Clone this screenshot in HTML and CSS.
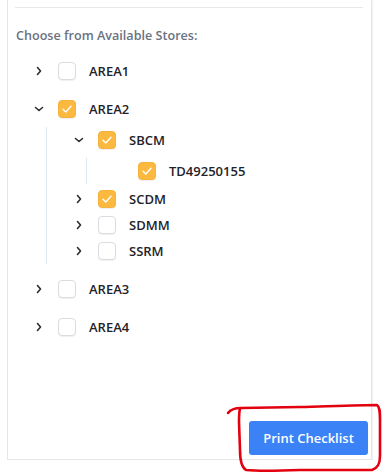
FILE: index.html
```html
<!DOCTYPE html>
<html lang="en">
<head>
    <meta charset="UTF-8">
    <meta name="viewport" content="width=device-width, initial-scale=1.0">
    <title>Print Checklist</title>
    <link rel="stylesheet" href="styles.css">
</head>
<body>
    <div class="card">
        <div class="divider"></div>
        <h4 class="stores-title">Choose from Available Stores:</h4>

        <ul class="tree">
            <li class="node">
                <div class="row">
                    <span class="toggle"><svg width="10" height="10" viewBox="0 0 10 10"><path d="M3.5 1.5 L6.5 5 L3.5 8.5"/></svg></span>
                    <span class="check"></span>
                    <span class="label">AREA1</span>
                </div>
            </li>
            <li class="node">
                <div class="row">
                    <span class="toggle"><svg width="10" height="10" viewBox="0 0 10 10"><path d="M1.5 3.5 L5 6.5 L8.5 3.5"/></svg></span>
                    <span class="check checked"><svg width="18" height="18" viewBox="0 0 18 18"><path d="M5 9.2 L7.8 12 L13 6.3"/></svg></span>
                    <span class="label">AREA2</span>
                </div>
                <ul class="children">
                    <li class="node">
                        <div class="row">
                            <span class="toggle"><svg width="10" height="10" viewBox="0 0 10 10"><path d="M1.5 3.5 L5 6.5 L8.5 3.5"/></svg></span>
                            <span class="check checked"><svg width="18" height="18" viewBox="0 0 18 18"><path d="M5 9.2 L7.8 12 L13 6.3"/></svg></span>
                            <span class="label">SBCM</span>
                        </div>
                        <ul class="children">
                            <li class="node">
                                <div class="row">
                                    <span class="toggle"></span>
                                    <span class="check checked"><svg width="18" height="18" viewBox="0 0 18 18"><path d="M5 9.2 L7.8 12 L13 6.3"/></svg></span>
                                    <span class="label">TD49250155</span>
                                </div>
                            </li>
                        </ul>
                    </li>
                    <li class="node">
                        <div class="row">
                            <span class="toggle"><svg width="10" height="10" viewBox="0 0 10 10"><path d="M3.5 1.5 L6.5 5 L3.5 8.5"/></svg></span>
                            <span class="check checked"><svg width="18" height="18" viewBox="0 0 18 18"><path d="M5 9.2 L7.8 12 L13 6.3"/></svg></span>
                            <span class="label">SCDM</span>
                        </div>
                    </li>
                    <li class="node">
                        <div class="row">
                            <span class="toggle"><svg width="10" height="10" viewBox="0 0 10 10"><path d="M3.5 1.5 L6.5 5 L3.5 8.5"/></svg></span>
                            <span class="check"></span>
                            <span class="label">SDMM</span>
                        </div>
                    </li>
                    <li class="node">
                        <div class="row">
                            <span class="toggle"><svg width="10" height="10" viewBox="0 0 10 10"><path d="M3.5 1.5 L6.5 5 L3.5 8.5"/></svg></span>
                            <span class="check"></span>
                            <span class="label">SSRM</span>
                        </div>
                    </li>
                </ul>
            </li>
            <li class="node">
                <div class="row">
                    <span class="toggle"><svg width="10" height="10" viewBox="0 0 10 10"><path d="M3.5 1.5 L6.5 5 L3.5 8.5"/></svg></span>
                    <span class="check"></span>
                    <span class="label">AREA3</span>
                </div>
            </li>
            <li class="node">
                <div class="row">
                    <span class="toggle"><svg width="10" height="10" viewBox="0 0 10 10"><path d="M3.5 1.5 L6.5 5 L3.5 8.5"/></svg></span>
                    <span class="check"></span>
                    <span class="label">AREA4</span>
                </div>
            </li>
        </ul>

        <div class="footer">
            <button class="print-btn">Print Checklist</button>
        </div>
    </div>

    <!-- hand-drawn highlight around the button -->
    <svg class="annotation" width="386" height="476" viewBox="0 0 386 476">
        <path d="M228 413 C231 409 235 408 241 408 L300 407 C335 406 362 405 377 405 C380 407 380 412 380 420 L380 456 C380 464 378 468 372 470 L300 470 C275 471 255 471 246 470 C241 467 240 460 240 450 L239 422 C239 416 239 412 240 409"/>
    </svg>
</body>
</html>
```

FILE: styles.css
```css
body {
    margin: 0;
    padding: 0;
    background-color: #fff;
    font-family: "Open Sans", "Noto Sans", Arial, sans-serif;
}
.card {
    box-sizing: border-box;
    width: 365px;
    height: 460px;
    margin-left: 7px;
    background-color: #fff;
    border: 1px solid #e6e6e6;
    border-top: 0;
    box-shadow: 1px 1px 1px rgba(0,0,0,0.05);
    padding-top: 7px;
    display: flex;
    flex-direction: column;
}
.divider {
    height: 1px;
    background-color: #e8e8e8;
    margin: 0 8px 0 7px;
}
.stores-title {
    margin: 19px 0 0 8px;
    font-size: 12.6px;
    line-height: 18px;
    font-weight: 600;
    color: #6b7280;
}
.tree {
    list-style: none;
    margin: 13px 0 0 22px;
    padding: 0;
}
.tree > .node + .node {
    margin-top: 12px;
}
.children {
    list-style: none;
    margin: 5px 0 2px 16px;
    padding: 0 0 0 23px;
    border-left: 1px solid #e2e8f0;
}
.row {
    display: flex;
    align-items: center;
    height: 26px;
}
.toggle {
    width: 18px;
    height: 18px;
    margin-right: 10px;
    display: flex;
    align-items: center;
    justify-content: center;
}
.toggle svg path {
    fill: none;
    stroke: #2d2d2d;
    stroke-width: 1.6;
    stroke-linecap: round;
    stroke-linejoin: round;
}
.check {
    box-sizing: border-box;
    width: 18px;
    height: 18px;
    margin-right: 13px;
    border: 1px solid #d9dce1;
    border-radius: 4px;
    background-color: #fff;
    box-shadow: 0 1px 1px rgba(0,0,0,0.06);
    display: flex;
}
.check.checked {
    background-color: #fbb93f;
    border-color: #f6b23a;
}
.check svg {
    margin: -1px;
}
.check svg path {
    fill: none;
    stroke: #fff;
    stroke-width: 1.4;
    stroke-linecap: round;
    stroke-linejoin: round;
}
.label {
    font-size: 13px;
    font-weight: 600;
    color: #1f2329;
}
.footer {
    margin-top: auto;
    display: flex;
    justify-content: flex-end;
    padding: 0 3px 4px 0;
}
.print-btn {
    width: 119px;
    height: 34px;
    border: 0;
    border-radius: 3px;
    background-color: #3b82f6;
    color: #fff;
    font-family: "Open Sans", "Noto Sans", Arial, sans-serif;
    font-size: 13px;
    font-weight: 600;
    padding: 0;
}
.annotation {
    position: absolute;
    top: 0;
    left: 0;
    pointer-events: none;
}
.annotation path {
    fill: none;
    stroke: #e3000f;
    stroke-width: 2.6;
    stroke-linecap: round;
    stroke-linejoin: round;
}
```
